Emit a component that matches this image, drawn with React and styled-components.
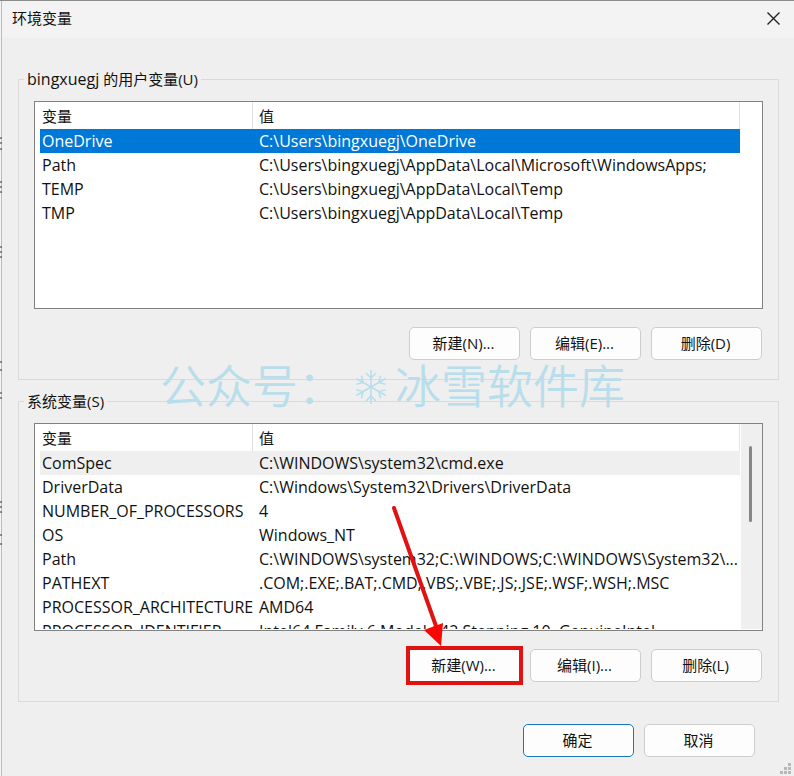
import React from "react";
import styled, { createGlobalStyle, css } from "styled-components";

const userVariables = [
	{ name: "OneDrive", value: "C:\\Users\\bingxuegj\\OneDrive" },
	{
		name: "Path",
		value: "C:\\Users\\bingxuegj\\AppData\\Local\\Microsoft\\WindowsApps;",
	},
	{ name: "TEMP", value: "C:\\Users\\bingxuegj\\AppData\\Local\\Temp" },
	{ name: "TMP", value: "C:\\Users\\bingxuegj\\AppData\\Local\\Temp" },
];

const systemVariables = [
	{ name: "ComSpec", value: "C:\\WINDOWS\\system32\\cmd.exe" },
	{ name: "DriverData", value: "C:\\Windows\\System32\\Drivers\\DriverData" },
	{ name: "NUMBER_OF_PROCESSORS", value: "4" },
	{ name: "OS", value: "Windows_NT" },
	{
		name: "Path",
		value: "C:\\WINDOWS\\system32;C:\\WINDOWS;C:\\WINDOWS\\System32\\...",
	},
	{
		name: "PATHEXT",
		value: ".COM;.EXE;.BAT;.CMD;.VBS;.VBE;.JS;.JSE;.WSF;.WSH;.MSC",
	},
	{ name: "PROCESSOR_ARCHITECTURE", value: "AMD64" },
	{
		name: "PROCESSOR_IDENTIFIER",
		value: "Intel64 Family 6 Model 142 Stepping 10, GenuineIntel",
	},
];

const GlobalStyle = createGlobalStyle`
	* {
		box-sizing: border-box;
	}
	body {
		margin: 0;
		background: #efefef;
		color: #111;
		font-family: "Open Sans", "Noto Sans CJK SC", sans-serif;
		font-size: 15px;
		line-height: 22px;
	}
	button {
		font: inherit;
		color: inherit;
	}
`;

const Dialog = styled.div`
	position: relative;
	display: flex;
	flex-direction: column;
	min-height: 100vh;
	padding-left: 2px;
	border-top: 1px solid #8c8c8c;
	overflow: hidden;
`;

const WindowEdge = styled.svg`
	position: absolute;
	left: 0;
	top: 0;
`;

const TitleBar = styled.header`
	display: flex;
	align-items: center;
	justify-content: space-between;
	height: 37px;
	padding: 0 14px 3px 10px;
	background: #f3f3f3;
`;

const Title = styled.h1`
	margin: 0;
	font-size: 15px;
	font-weight: 400;
`;

const CloseButton = styled.button`
	display: flex;
	padding: 0;
	border: 0;
	background: none;
`;

const Content = styled.main`
	display: flex;
	flex-direction: column;
	gap: 10px;
	padding: 30px 15px 0 16px;
`;

const Group = styled.fieldset`
	min-width: 0;
	margin: 0;
	padding: 11px 15px 19px;
	border: 1px solid #dadada;
`;

const Legend = styled.legend`
	margin-left: -10px;
	padding: 0 3px;
`;

const UserName = styled.span`
	font-size: 16px;
`;

const List = styled.div`
	display: flex;
	height: 208px;
	padding: 0 0 1px 5px;
	border: 1px solid #828282;
	background: #fff;
`;

const ListView = styled.div`
	flex: 1;
	min-width: 0;
	overflow: hidden;
`;

const ScrollTrack = styled.div`
	width: 22px;
	padding: 22px 10px 0 8px;
	border-left: 1px solid #fff;
	background: ${({ $active }) => ($active ? "#efefef" : "#fff")};
`;

const ScrollThumb = styled.div`
	height: 76px;
	border-radius: 2px;
	background: #868686;
`;

const Table = styled.table`
	width: 100%;
	table-layout: fixed;
	border-collapse: separate;
	border-spacing: 0;
`;

const HeadCell = styled.th`
	width: ${({ $width }) => $width || "auto"};
	height: 27px;
	padding: 1px 2px 0;
	border-right: 1px solid #e2e2e2;
	font-weight: 400;
	text-align: left;

	& + & {
		padding-left: 6px;
	}
`;

const rowStates = {
	selected: css`
		background: #0078d7;
		color: #fff;
	`,
	inactive: css`
		background: #efefef;
	`,
};

const Row = styled.tr`
	${({ $state }) => rowStates[$state]}
`;

const Cell = styled.td`
	height: 24px;
	padding: 0 0 0 2px;
	font-size: 16px;
	white-space: nowrap;

	& + & {
		padding-left: 6px;
	}
`;

const ButtonRow = styled.div`
	display: flex;
	justify-content: flex-end;
	gap: 10px;
	margin-top: 18px;
	padding-right: 1px;
`;

const Footer = styled(ButtonRow)`
	padding: 4px 39px 19px 0;
`;

const Button = styled.button`
	width: 111px;
	height: 33px;
	padding: 0 2px 2px 0;
	border: 1px solid ${({ $primary }) => ($primary ? "#1a78b8" : "#cdcdcd")};
	border-radius: 5px;
	background: #fdfdfd;

	${({ $marked }) =>
		$marked &&
		css`
			outline: 4px solid #e01212;
			outline-offset: -1px;
			border-radius: 0;
		`}
`;

const Marked = styled.div`
	position: relative;
	display: flex;
`;

const Arrow = styled.svg`
	position: absolute;
	left: -19px;
	bottom: 36px;
	pointer-events: none;
`;

const WatermarkAnchor = styled.div`
	position: relative;
`;

const Watermark = styled.div`
	position: absolute;
	left: 126px;
	bottom: -53px;
	display: flex;
	align-items: center;
	color: #b9deeb;
	font-family: "Noto Sans CJK SC", sans-serif;
	font-size: 46px;
	font-weight: 350;
	line-height: 60px;
	white-space: nowrap;
	pointer-events: none;

	svg {
		margin: 8px 7px 0 10px;
	}
`;

const Grip = styled.svg`
	position: absolute;
	right: 3px;
	bottom: 2px;
`;

const gripDots = [
	[8, 0],
	[4, 4],
	[8, 4],
	[0, 8],
	[4, 8],
	[8, 8],
];

const Snowflake = () => (
	<svg
		width="34"
		height="36"
		viewBox="-17 -18 34 36"
		fill="none"
		stroke="currentColor"
		strokeWidth="1.6"
	>
		{[0, 60, 120, 180, 240, 300].map((angle) => (
			<path
				key={angle}
				transform={`rotate(${angle})`}
				d="M0 0V-17M-5 -14L0 -9L5 -14"
			/>
		))}
	</svg>
);

const VariableList = ({ label, rows, activeState, scrollable }) => (
	<List>
		<ListView>
			<Table aria-label={label}>
				<thead>
					<tr>
						<HeadCell $width="213px">变量</HeadCell>
						<HeadCell>值</HeadCell>
					</tr>
				</thead>
				<tbody>
					{rows.map(({ name, value }, index) => (
						<Row key={name} $state={index === 0 ? activeState : undefined}>
							<Cell>{name}</Cell>
							<Cell>{value}</Cell>
						</Row>
					))}
				</tbody>
			</Table>
		</ListView>
		<ScrollTrack $active={scrollable}>
			{scrollable && <ScrollThumb />}
		</ScrollTrack>
	</List>
);

const App = () => (
	<>
		<GlobalStyle />
		<Dialog>
			{/* sliver of the window behind the dialog */}
			<WindowEdge width="2" height="776" aria-hidden="true">
				<path d="M0 0H2V776H0Z" fill="#f3f3f3" />
				<path d="M1.5 0V776" stroke="#bdbdbd" />
				<path
					d="M0 137H2M0 142H2M0 148H2M0 181H2M0 186H2M0 191H2M0 246H2M0 251H2M0 256H2M0 361H2M0 369H2M0 392H2M0 397H2M0 501H2M0 506H2M0 511H2M0 534H2M0 543H2"
					stroke="#333"
				/>
			</WindowEdge>
			<TitleBar>
				<Title>环境变量</Title>
				<CloseButton aria-label="关闭">
					<svg width="13" height="13" stroke="#222" strokeWidth="1.4">
						<path d="M0.5 0.5L12.5 12.5M12.5 0.5L0.5 12.5" />
					</svg>
				</CloseButton>
			</TitleBar>
			<Content>
				<Group>
					<Legend>
						<UserName>bingxuegj</UserName> 的用户变量(U)
					</Legend>
					<VariableList
						label="用户变量"
						rows={userVariables}
						activeState="selected"
					/>
					<ButtonRow>
						<Button>新建(N)...</Button>
						<Button>编辑(E)...</Button>
						<Button>删除(D)</Button>
					</ButtonRow>
					<WatermarkAnchor>
						<Watermark>
							公众号：
							<Snowflake />
							冰雪软件库
						</Watermark>
					</WatermarkAnchor>
				</Group>
				<Group>
					<Legend>系统变量(S)</Legend>
					<VariableList
						label="系统变量"
						rows={systemVariables}
						activeState="inactive"
						scrollable
					/>
					<ButtonRow>
						<Marked>
							<Button $marked>新建(W)...</Button>
							<Arrow width="60" height="142" viewBox="0 0 60 142">
								<path
									d="M4 4L46 122"
									stroke="#e01212"
									strokeWidth="4"
									strokeLinecap="round"
								/>
								<path d="M34 126L53 119L51 142Z" fill="#fb0505" />
							</Arrow>
						</Marked>
						<Button>编辑(I)...</Button>
						<Button>删除(L)</Button>
					</ButtonRow>
				</Group>
			</Content>
			<Footer>
				<Button $primary>确定</Button>
				<Button>取消</Button>
			</Footer>
			<Grip width="11" height="11" fill="#b8b8b8" aria-hidden="true">
				{gripDots.map(([x, y]) => (
					<rect key={`${x}-${y}`} x={x} y={y} width="3" height="3" />
				))}
			</Grip>
		</Dialog>
	</>
);

export default App;
